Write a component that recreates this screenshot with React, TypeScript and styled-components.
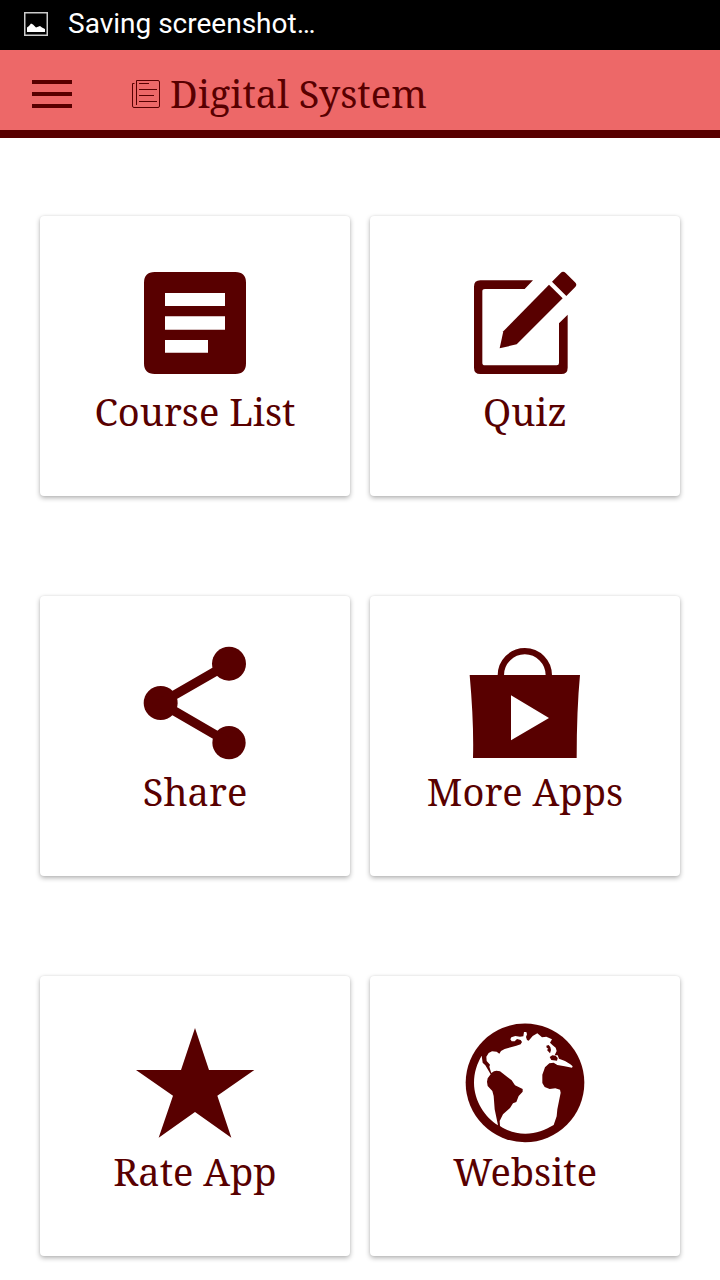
import React from "react";
import styled, { createGlobalStyle } from "styled-components";

const maroon = "#580000";

const GlobalStyle = createGlobalStyle`
  *, *::before, *::after { box-sizing: border-box; }
  body { margin: 0; background: #fff; overflow: hidden; }
`;

const Screen = styled.div`
  width: 720px;
  height: 1280px;
  overflow: hidden;
  background: #fff;
  color: ${maroon};
  font-family: "Noto Serif", "Droid Serif", "DejaVu Serif Condensed", "DejaVu Serif", serif;
`;

const StatusBar = styled.div`
  display: flex;
  align-items: center;
  gap: 20px;
  height: 50px;
  padding: 0 24px 2px;
  background: #000;
  color: #fff;
  font: 400 28px/48px Roboto, sans-serif;
`;

const StatusText = styled.span`
  white-space: nowrap;
`;

const Header = styled.header`
  display: flex;
  align-items: center;
  height: 88px;
  padding: 0 32px;
  background: #ed6868;
  border-bottom: 8px solid ${maroon};
`;

const MenuButton = styled.button`
  display: flex;
  flex-direction: column;
  gap: 8px;
  width: 40px;
  margin: 8px 60px 0 0;
  padding: 0;
  border: 0;
  background: none;
`;

const MenuLine = styled.span`
  height: 4px;
  background: ${maroon};
`;

const PaperIcon = styled.svg`
  width: 28px;
  height: 28px;
  margin-top: 8px;
`;

const Title = styled.h1`
  margin: 6px 0 0 10px;
  font-size: 38px;
  font-weight: 400;
  line-height: 52px;
  white-space: nowrap;
`;

const Grid = styled.main`
  display: grid;
  grid-template-columns: repeat(2, 310px);
  gap: 100px 20px;
  padding: 78px 40px 0;
`;

const Card = styled.section`
  display: flex;
  flex-direction: column;
  align-items: center;
  height: 280px;
  padding-top: 47px;
  border-radius: 4px;
  background: #fff;
  box-shadow: 0 2px 5px rgba(0, 0, 0, 0.3), 0 0 2px rgba(0, 0, 0, 0.08);
`;

const CardIcon = styled.svg`
  width: 120px;
  height: 120px;
  fill: ${maroon};
`;

const Label = styled.span`
  margin-top: 2px;
  font-size: 38px;
  line-height: 52px;
  white-space: nowrap;
`;

const ListIcon = () => (
  <CardIcon viewBox="315 174 360 360">
    <path fillRule="evenodd" d="M374 201H616Q648 201 648 233V475Q648 507 616 507H374Q342 507 342 475V233Q342 201 374 201ZM405 264V303H585V264ZM405 334V374H585V334ZM405 405V443H534V405Z" />
  </CardIcon>
);

const QuizIcon = () => (
  <CardIcon viewBox="15 9 360 360">
    <path d="M219 61H61Q42 61 42 80V323Q42 342 61 342H304Q323 342 323 323V164L297 190V309Q297 316 290 316H75Q67 316 67 309V94Q67 87 75 87H194Z" />
    <path d="M267 74L308 115L170 253L119 265L130 214Z" />
    <path d="M276 65L302 39Q309 32 317 39L345 67Q353 75 345 82L319 108Z" />
  </CardIcon>
);

const ShareIcon = () => (
  <CardIcon viewBox="15 9 360 360">
    <circle cx="92" cy="189" r="51" />
    <circle cx="297" cy="71" r="51" />
    <circle cx="297" cy="308" r="50" />
    <path d="M297 71L92 189L297 308" fill="none" stroke={maroon} strokeWidth="28" />
  </CardIcon>
);

const BagIcon = () => (
  <CardIcon viewBox="15 9 360 360">
    <path d="M122.500 110V106A72 72.500 0 0 1 266.500 106V110" fill="none" stroke={maroon} strokeWidth="19" />
    <path fillRule="evenodd" d="M29 105H360Q350 210 350 354H39Q42 250 29 105ZM153 166V301L267 234Z" />
  </CardIcon>
);

const StarIcon = () => (
  <CardIcon viewBox="30 24 360 360">
    <path d="M210 39L252 165H388L277 242L319 368L210 291L101 368L144 242L33 165H168Z" />
  </CardIcon>
);

const GlobeIcon = () => (
  <CardIcon viewBox="30 24 360 360">
    <circle cx="210" cy="203.500" r="178" />
    <path
      fill="#fff"
      d="M80 122L83 143L91 151L107 178L98 190L96 200L98 213L112 228L116 243L119 283L129 331C91 307 57 258 57 203C57 172 66 146 80 122Z"
    />
    <path
      fill="#fff"
      d="M108 172L103 155L105 149L95 138L94 125L101 114L111 109L125 110L133 116L138 108L149 102L184 92L197 88L201 81L197 75L186 72L179 79L170 79L166 73L169 67L181 63L195 65L205 64L207 51H214L216 58L213 66L216 75L221 77L233 63L247 55L261 67L274 65L291 73L285 83L293 91L302 98L305 108L299 121H308L312 131L330 138L346 148L353 154L351 158L329 154L307 150L296 143L283 145L270 157L262 179V204L269 216L284 222L301 220L315 224L317 233L312 258L307 283L305 304L296 330C270 345 244 356 211 356C181 356 154 346 135 333L134 318L144 298L165 279L174 265L184 261L191 243L203 230V222L180 211L170 196L157 186L135 169L124 167L117 169L109 174Z"
    />
    <path d="M274 92L281 90L286 96L288 105L285 115L276 105L280 101L275 98Z" />
    <path d="M284 126L292 121L302 122L308 129L306 137L289 135Z" />
  </CardIcon>
);

const items = [
  { label: "Course List", Icon: ListIcon },
  { label: "Quiz", Icon: QuizIcon },
  { label: "Share", Icon: ShareIcon },
  { label: "More Apps", Icon: BagIcon },
  { label: "Rate App", Icon: StarIcon },
  { label: "Website", Icon: GlobeIcon },
];

export default function App() {
  return (
    <Screen>
      <GlobalStyle />
      <StatusBar>
        <svg width="24" height="24" viewBox="0 0 24 24">
          <rect x=".75" y=".75" width="22.5" height="22.5" fill="none" stroke="#ccc" strokeWidth="1.5" />
          <path d="M3 20V15.500L5 14L7 11.500L9 12.500L12 15.500L16 14L18 15.500L21 17V20Z" fill="#fff" />
        </svg>
        <StatusText>Saving screenshot…</StatusText>
      </StatusBar>
      <Header>
        <MenuButton aria-label="Menu">
          <MenuLine />
          <MenuLine />
          <MenuLine />
        </MenuButton>
        <PaperIcon viewBox="0 0 28 28" fill="none" stroke={maroon} strokeWidth="1">
          <path d="M4.500 25V.5H26Q27.500 .5 27.500 2V26Q27.500 27.500 26 27.500H2Q.5 27.500 .5 26V3.500H2.500M7 3.500H17M7 9.500H25M7 15.500H22M7 21.500H25" />
        </PaperIcon>
        <Title>Digital System</Title>
      </Header>
      <Grid>
        {items.map(({ label, Icon }) => (
          <Card key={label}>
            <Icon />
            <Label>{label}</Label>
          </Card>
        ))}
      </Grid>
    </Screen>
  );
}
